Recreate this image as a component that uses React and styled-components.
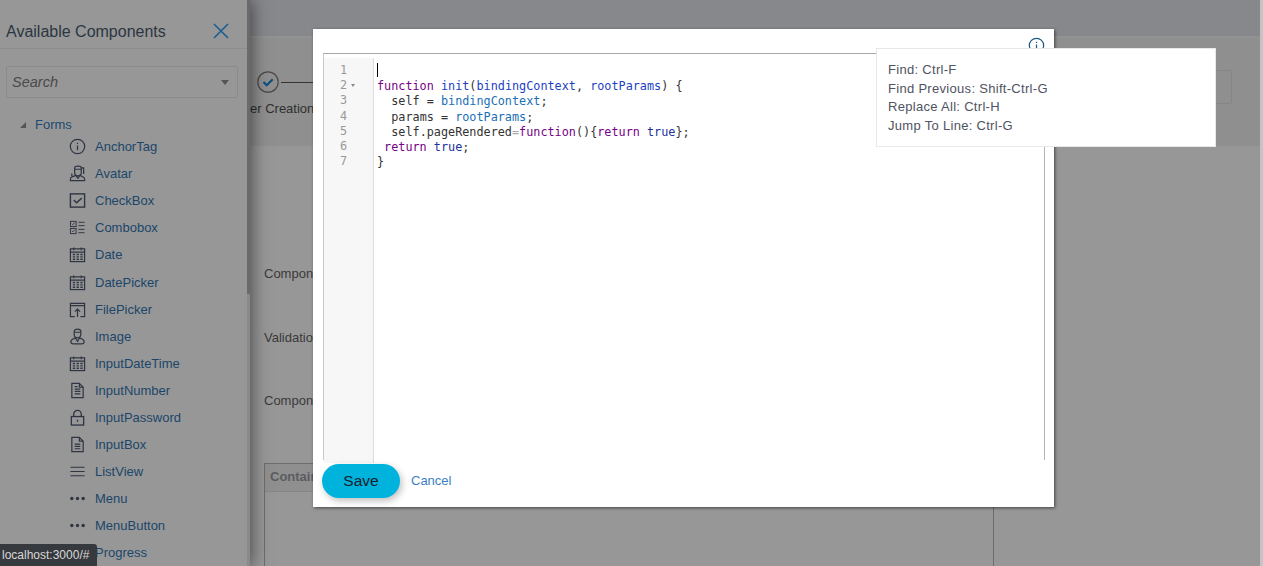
import React from 'react';
import styled, { createGlobalStyle } from 'styled-components';

const GlobalStyle = createGlobalStyle`
  html, body { margin: 0; padding: 0; overflow: hidden; }
  body { font-family: "Liberation Sans", Arial, sans-serif; }
`;

const Page = styled.div`
  position: relative;
  width: 1263px;
  height: 566px;
  overflow: hidden;
  background: #979797;
`;

const Backdrop = styled.div`
  width: 1260px;
  height: 566px;
  overflow: hidden;
  border-right: 3px solid #c4c4c4;
  color: #3b3b3b;
  font-size: 13px;
`;

const TopBar = styled.div`
  height: 38px;
  background: #87888b;
  border-bottom: 2px solid #929292;
  box-sizing: border-box;
`;

const WizardBand = styled.div`
  height: 108px;
  box-sizing: border-box;
  background: #8f8f8f;
  padding: 32px 28px 0 250px;
  display: flex;
  justify-content: space-between;
`;

const Step = styled.div`
  width: 64px;
  white-space: nowrap;
  overflow: hidden;
`;

const StepMark = styled.div`
  display: flex;
  align-items: center;
  gap: 2px;
  padding-left: 7px;
  margin-top: 1px;
`;

const StepLine = styled.span`
  flex: 1;
  height: 1px;
  background: #333;
`;

const StepLabel = styled.div`
  margin-top: 8px;
  color: #2e2e2e;
`;

const GhostInput = styled.div`
  width: 176px;
  height: 32px;
  border: 1px solid #858585;
  border-radius: 2px;
`;

const FormArea = styled.div`
  padding: 120px 0 0 264px;
`;

const FormLabel = styled.div`
  height: 63.5px;
  color: #3a3a3a;
`;

const ContainerBox = styled.div`
  margin-top: 6px;
  width: 730px;
  height: 200px;
  box-sizing: border-box;
  border: 1px solid #6d6d70;
`;

const ContainerHead = styled.div`
  height: 27px;
  line-height: 25px;
  padding-left: 5px;
  background: #8f8f8f;
  font-weight: bold;
  color: #5c5c60;
  border-bottom: 1px solid #868686;
`;

const Drawer = styled.aside`
  position: absolute;
  left: 0;
  top: 0;
  bottom: 0;
  width: 250px;
  box-sizing: border-box;
  background: #979797;
  border-right: 3px solid #8a8a8a;
  box-shadow: 2px 0 16px rgba(0, 0, 0, 0.5);
`;

const ScrollThumb = styled.div`
  position: absolute;
  right: -3px;
  top: 0;
  width: 3px;
  height: 294px;
  background: #6a6a6a;
`;

const DrawerHead = styled.div`
  height: 49px;
  box-sizing: border-box;
  padding: 14px 18px 0 6px;
  display: flex;
  align-items: center;
  justify-content: space-between;
  border-bottom: 1px solid #8e8e8e;
  font-size: 16px;
  color: #2b3642;
  span { padding-top: 2px; }
`;

const SearchBox = styled.div`
  margin: 17px 9px 0 6px;
  height: 32px;
  box-sizing: border-box;
  border: 1px solid #8b8b8b;
  border-radius: 2px;
  display: flex;
  align-items: center;
  justify-content: space-between;
  padding: 0 8px 0 5px;
  font-size: 14.5px;
  font-style: italic;
  color: #4a4a4a;
`;

const Caret = styled.span`
  width: 0;
  height: 0;
  border-left: 4px solid transparent;
  border-right: 4px solid transparent;
  border-top: 5px solid #555;
`;

const Tree = styled.div`
  padding-top: 18px;
  font-size: 13px;
`;

const TreeGroup = styled.div`
  display: flex;
  align-items: center;
  gap: 9px;
  height: 17px;
  padding-left: 20px;
  color: #1c4a70;
`;

const TreeRow = styled.div`
  display: flex;
  align-items: center;
  gap: 9px;
  height: 27.1px;
  padding-left: 69px;
  color: #1b4669;
  white-space: nowrap;
  svg { flex: none; }
`;

const TreeArrow = styled.span`
  width: 0;
  height: 0;
  border-bottom: 6px solid #555;
  border-left: 6px solid transparent;
`;

const Modal = styled.div`
  position: absolute;
  left: 313px;
  top: 29px;
  width: 741px;
  height: 478px;
  box-sizing: border-box;
  background: #fff;
  box-shadow: 1px 1px 3px rgba(0, 0, 0, 0.55);
  padding: 24px 10px 0;
`;

const InfoButton = styled.div`
  position: absolute;
  right: 9px;
  top: 8px;
  line-height: 0;
`;

const Editor = styled.div`
  height: 407px;
  width: 722px;
  box-sizing: border-box;
  border-top: 1px solid #a8a8a8;
  border-left: 1px solid #c8c8c8;
  border-right: 1px solid #b4b4b4;
  display: flex;
  font-family: "DejaVu Sans Mono", "Liberation Mono", monospace;
  font-size: 11.8px;
  line-height: 15.2px;
`;

const Gutter = styled.div`
  width: 50px;
  height: 405px;
  margin-top: 4px;
  box-sizing: border-box;
  padding-top: 5px;
  background: #f7f7f7;
  border-right: 1px solid #dcdcdc;
  color: #999;
`;

const GutterLine = styled.div`
  position: relative;
  padding-left: 16px;
  i {
    position: absolute;
    left: 27px;
    top: 6px;
    width: 0;
    height: 0;
    border-left: 2.5px solid transparent;
    border-right: 2.5px solid transparent;
    border-top: 3.5px solid #888;
  }
`;

const Code = styled.pre`
  margin: 0;
  padding: 9px 0 0 3px;
  font: inherit;
  color: #333;
`;

const TextCaret = styled.span`
  display: inline-block;
  width: 1px;
  height: 14px;
  background: #000;
  vertical-align: -2px;
`;

const Kw = styled.span` color: #770088; `;
const Def = styled.span` color: #1d3fc4; `;
const Var = styled.span` color: #1a6fb8; `;
const Atom = styled.span` color: #22329c; `;
const Op = styled.span` color: #aaa; `;

const Footer = styled.div`
  display: flex;
  align-items: center;
  gap: 11px;
  margin: 4px 0 0 -1px;
`;

const SaveButton = styled.button`
  width: 78px;
  height: 34px;
  border: none;
  border-radius: 17px;
  background: #00b3dd;
  color: #17202c;
  font-family: inherit;
  font-size: 15.5px;
  box-shadow: 2px 3px 7px rgba(0, 0, 0, 0.25);
`;

const CancelLink = styled.a`
  font-size: 13px;
  color: #3d7fc4;
  margin-top: -1px;
`;

const ShortcutTip = styled.div`
  position: absolute;
  left: 876px;
  top: 48px;
  width: 340px;
  height: 99px;
  box-sizing: border-box;
  background: #fff;
  border: 1px solid #e8e8e8;
  padding: 12px 11px;
  font-size: 13px;
  line-height: 18.7px;
  letter-spacing: 0.3px;
  color: #4f5361;
`;

const StatusTip = styled.div`
  position: absolute;
  left: 0;
  bottom: 0;
  height: 22px;
  padding: 0 8px 0 2px;
  line-height: 23px;
  background: #36393d;
  border-top-right-radius: 3px;
  color: #d8d8d8;
  font-size: 12px;
`;

const Glyph = ({ children, size = 17, color = '#2f3542', width = 1.3 }) => (
  <svg width={size} height={size} viewBox="0 0 18 18" fill="none" stroke={color} strokeWidth={width}>
    {children}
  </svg>
);

const InfoGlyph = ({ color, size }) => (
  <Glyph color={color} size={size}>
    <circle cx="9" cy="9" r="7.6" />
    <path d="M9 8v5M9 5v1.4" />
  </Glyph>
);

const PersonGlyph = () => (
  <Glyph>
    <path d="M5.5 3.5C5.5 2 7 1.2 9 1.2s3.5.8 3.5 2.3V7a3.5 3.5 0 0 1-7 0zM5.5 4.5h7" />
    <path d="M6.8 10.5C4 11.5 2 12.5 2 14.5c0 1.5 1 2.3 2.500 2.300h9c1.500 0 2.500-.8 2.500-2.300 0-2-2-3-4.800-4L9 14z" />
  </Glyph>
);

const AvatarGlyph = () => (
  <Glyph>
    <path d="M6 3c0-1.200 1.300-1.800 3.300-1.800S13 1.800 13 3v5a3.500 3.500 0 0 1-7 0zM6 4.500h7M13 3h2.500v6.500" />
    <path d="M3 9v3M7 11 2.500 13c-1 .5-1 1-1 2v1.500h15V15c0-1 0-1.500-1-2L11.500 11 9.500 14z" />
  </Glyph>
);

const CheckGlyph = () => (
  <Glyph width={1.5}>
    <rect x="1.5" y="2" width="15" height="14" />
    <path d="m5 8.500 3 3 5.500-5" />
  </Glyph>
);

const ComboGlyph = () => (
  <Glyph width={1}>
    <rect x="1.500" y="2.500" width="6" height="5.500" />
    <rect x="1.500" y="10" width="6" height="5.500" />
    <path d="M3 5l1 1 2-2M3 12.500l1 1 2-2M10 3.500h6.500M10 7h6.500M10 11h6.500M10 14.500h6.500" />
  </Glyph>
);

const CalendarGlyph = () => (
  <Glyph>
    <rect x="1.500" y="3" width="15" height="13.500" />
    <path d="M1.500 6.500h15M5 1.500v3M13 1.500v3" />
    <path d="M4 9h2.500M8 9h2.500M12 9h2.500M4 11.500h2.500M8 11.500h2.500M12 11.500h2.500M4 14h2.500M8 14h2.500M12 14h2.500" strokeWidth="1.5" />
  </Glyph>
);

const UploadGlyph = () => (
  <Glyph>
    <path d="M6 16.500H1.500v-14h15v14H12M1.500 5h15" />
    <path d="M9 17V8.500M6.200 11.200 9 8.500l2.800 2.700" />
  </Glyph>
);

const DocGlyph = () => (
  <Glyph>
    <path d="M3 1.500h8l4 4v11H3z" />
    <path d="M11 1.500v4h4M6 8.500h6M6 11h6M6 13.500h6" />
  </Glyph>
);

const NoteGlyph = () => (
  <Glyph>
    <path d="M3 1.500h8l4 4v11H3z" />
    <path d="M11 1.500v4h4M6 5h3M6 7.500h6M6 10h6M6 12.500h6" />
  </Glyph>
);

const LockGlyph = () => (
  <Glyph width={1.4}>
    <rect x="2.500" y="8" width="13" height="9" />
    <path d="M5 8V5.500a4 4 0 0 1 8 0V8M9 11.500v2" />
  </Glyph>
);

const ListGlyph = () => (
  <Glyph width={1.3}>
    <path d="M1.500 4.500h15M1.500 9h15M1.500 13.500h15" />
  </Glyph>
);

const DotsGlyph = () => (
  <Glyph>
    <g fill="#2f3542" stroke="none">
      <circle cx="3" cy="9" r="1.800" />
      <circle cx="9" cy="9" r="1.800" />
      <circle cx="15" cy="9" r="1.800" />
    </g>
  </Glyph>
);

const components = [
  ['AnchorTag', <InfoGlyph key="i" />],
  ['Avatar', <AvatarGlyph key="i" />],
  ['CheckBox', <CheckGlyph key="i" />],
  ['Combobox', <ComboGlyph key="i" />],
  ['Date', <CalendarGlyph key="i" />],
  ['DatePicker', <CalendarGlyph key="i" />],
  ['FilePicker', <UploadGlyph key="i" />],
  ['Image', <PersonGlyph key="i" />],
  ['InputDateTime', <CalendarGlyph key="i" />],
  ['InputNumber', <NoteGlyph key="i" />],
  ['InputPassword', <LockGlyph key="i" />],
  ['InputBox', <DocGlyph key="i" />],
  ['ListView', <ListGlyph key="i" />],
  ['Menu', <DotsGlyph key="i" />],
  ['MenuButton', <DotsGlyph key="i" />],
  ['Progress', <DotsGlyph key="i" />],
];

function App() {
  return (
    <Page>
      <GlobalStyle />

      <Backdrop>
        <TopBar />
        <WizardBand>
          <Step>
            <StepMark>
              <svg width="22" height="22" viewBox="0 0 22 22" fill="none">
                <circle cx="11" cy="11" r="10.2" stroke="#4a4a4a" strokeWidth="1.2" />
                <path d="m6.5 11 3.2 3.2 6-6" stroke="#0f4f80" strokeWidth="2.2" />
              </svg>
              <StepLine />
            </StepMark>
            <StepLabel>er Creation</StepLabel>
          </Step>
          <GhostInput />
        </WizardBand>
        <FormArea>
          <FormLabel>Component</FormLabel>
          <FormLabel>Validation</FormLabel>
          <FormLabel>Component</FormLabel>
          <ContainerBox>
            <ContainerHead>Container</ContainerHead>
          </ContainerBox>
        </FormArea>
      </Backdrop>

      <Drawer>
        <ScrollThumb />
        <DrawerHead>
          <span>Available Components</span>
          <svg width="16" height="16" viewBox="0 0 16 16" stroke="#185f90" strokeWidth="1.6" fill="none">
            <path d="m1 1 14 14M15 1 1 15" />
          </svg>
        </DrawerHead>
        <SearchBox>
          Search
          <Caret />
        </SearchBox>
        <Tree>
          <TreeGroup>
            <TreeArrow />
            Forms
          </TreeGroup>
          {components.map(([name, icon]) => (
            <TreeRow key={name}>
              {icon}
              {name}
            </TreeRow>
          ))}
        </Tree>
      </Drawer>

      <Modal>
        <InfoButton>
          <InfoGlyph color="#1d5a86" size={17} />
        </InfoButton>
        <Editor>
          <Gutter>
            <GutterLine>1</GutterLine>
            <GutterLine>2<i /></GutterLine>
            <GutterLine>3</GutterLine>
            <GutterLine>4</GutterLine>
            <GutterLine>5</GutterLine>
            <GutterLine>6</GutterLine>
            <GutterLine>7</GutterLine>
          </Gutter>
          <Code>
            <TextCaret />{'\n'}
            <Kw>function</Kw> <Def>init</Def>(<Def>bindingContext</Def>, <Def>rootParams</Def>) {'{'}{'\n'}
            {'  '}self = <Var>bindingContext</Var>;{'\n'}
            {'  '}params = <Var>rootParams</Var>;{'\n'}
            {'  '}self.pageRendered<Op>=</Op><Kw>function</Kw>(){'{'}<Kw>return</Kw> <Atom>true</Atom>{'}'};{'\n'}
            {' '}<Kw>return</Kw> <Atom>true</Atom>;{'\n'}
            {'}'}
          </Code>
        </Editor>
        <Footer>
          <SaveButton>Save</SaveButton>
          <CancelLink>Cancel</CancelLink>
        </Footer>
      </Modal>

      <ShortcutTip>
        <div>Find: Ctrl-F</div>
        <div>Find Previous: Shift-Ctrl-G</div>
        <div>Replace All: Ctrl-H</div>
        <div>Jump To Line: Ctrl-G</div>
      </ShortcutTip>

      <StatusTip>localhost:3000/#</StatusTip>
    </Page>
  );
}

export default App;
